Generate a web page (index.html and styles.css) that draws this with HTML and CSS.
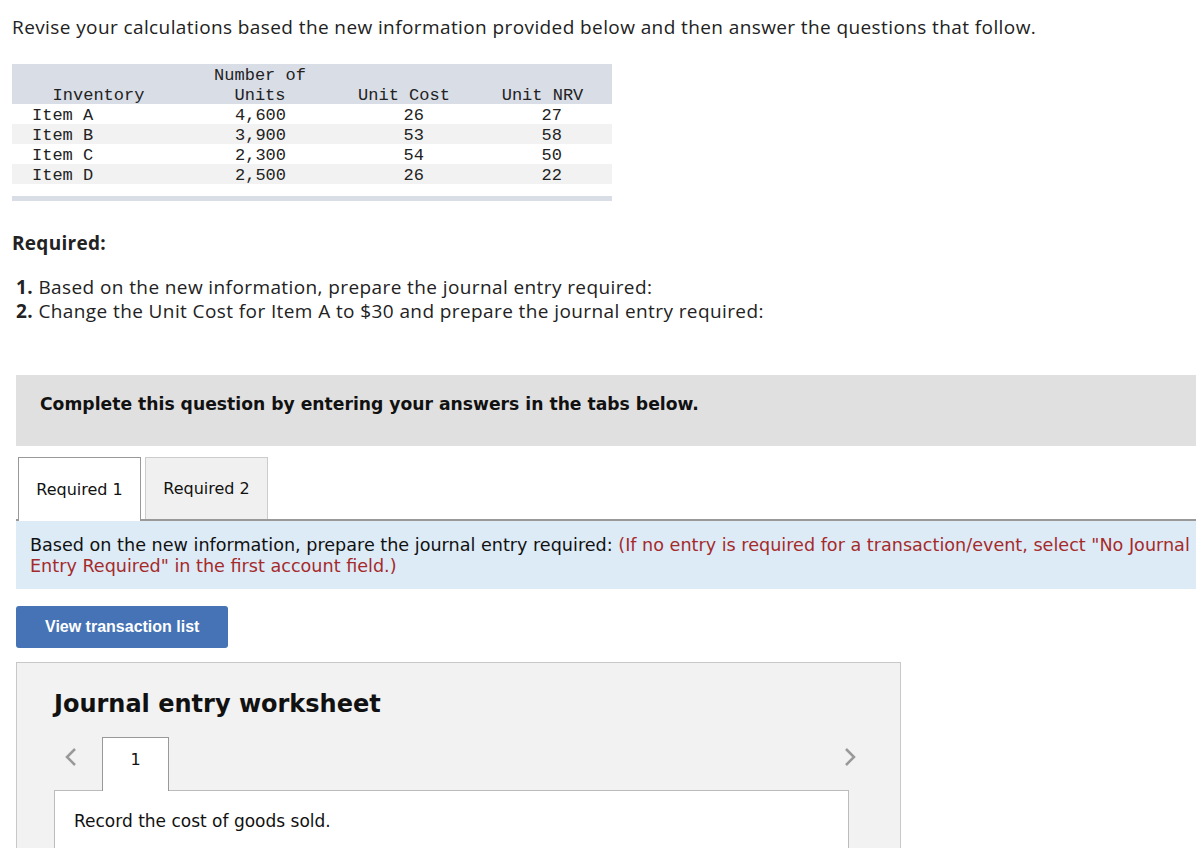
FILE: index.html
```html
<!DOCTYPE html>
<html lang="en">
<head>
  <meta charset="UTF-8">
  <title>Inventory NRV</title>
  <link rel="stylesheet" href="styles.css">
</head>
<body>
  <p class="intro">Revise your calculations based the new information provided below and then answer the questions that follow.</p>

  <table class="inv-table">
    <thead>
      <tr>
        <th class="col-name"></th>
        <th class="col-units">Number of</th>
        <th class="col-cost"></th>
        <th class="col-nrv"></th>
      </tr>
      <tr>
        <th class="col-name">Inventory</th>
        <th class="col-units">Units</th>
        <th class="col-cost">Unit Cost</th>
        <th class="col-nrv">Unit NRV</th>
      </tr>
    </thead>
    <tbody>
      <tr><td class="col-name">Item A</td><td class="col-units">4,600</td><td class="col-cost">26</td><td class="col-nrv">27</td></tr>
      <tr><td class="col-name">Item B</td><td class="col-units">3,900</td><td class="col-cost">53</td><td class="col-nrv">58</td></tr>
      <tr><td class="col-name">Item C</td><td class="col-units">2,300</td><td class="col-cost">54</td><td class="col-nrv">50</td></tr>
      <tr><td class="col-name">Item D</td><td class="col-units">2,500</td><td class="col-cost">26</td><td class="col-nrv">22</td></tr>
      <tr class="spacer"><td colspan="4"></td></tr>
    </tbody>
  </table>

  <h3 class="required-title">Required:</h3>
  <ol class="required-list">
    <li><strong>1.</strong> Based on the new information, prepare the journal entry required:</li>
    <li><strong>2.</strong> Change the Unit Cost for Item A to $30 and prepare the journal entry required:</li>
  </ol>

  <div class="complete-box">Complete this question by entering your answers in the tabs below.</div>

  <div class="tabs">
    <div class="tab active">Required 1</div>
    <div class="tab">Required 2</div>
  </div>

  <div class="info-box">
    Based on the new information, prepare the journal entry required: <span class="hint">(If no entry is required for a transaction/event, select "No Journal Entry Required" in the first account field.)</span>
  </div>

  <button class="view-btn">View transaction list</button>

  <div class="worksheet">
    <h2>Journal entry worksheet</h2>
    <div class="ws-nav">
      <svg class="arrow" width="14" height="22" viewBox="0 0 14 22"><path d="M11 3 L3 11 L11 19" fill="none" stroke="#999" stroke-width="2.5"/></svg>
      <div class="ws-tab">1</div>
      <svg class="arrow right" width="14" height="22" viewBox="0 0 14 22"><path d="M3 3 L11 11 L3 19" fill="none" stroke="#999" stroke-width="2.5"/></svg>
    </div>
    <div class="ws-body">Record the cost of goods sold.</div>
  </div>
</body>
</html>
```
FILE: styles.css
```css
body {
  margin: 0;
  padding: 0 0 0 12px;
  font-family: "Open Sans", "Liberation Sans", Arial, sans-serif;
  color: #222;
  overflow: hidden;
}

.intro {
  margin: 14px 0 0 0;
  font-size: 19px;
  letter-spacing: 0.4px;
  line-height: 26px;
}

.inv-table {
  margin-top: 24px;
  border-collapse: collapse;
  width: 600px;
  table-layout: fixed;
  font-family: "Liberation Mono", "Courier New", monospace;
  font-size: 17px;
  color: #222;
}

.inv-table th {
  background: #d9dde6;
  font-weight: normal;
  height: 20px;
  padding: 3px 0 0 0;
  line-height: 17px;
  text-align: center;
  box-sizing: border-box;
}

.inv-table td {
  height: 20px;
  padding: 3px 0 0 0;
  line-height: 17px;
  box-sizing: border-box;
}

.inv-table tbody tr:nth-child(even) td { background: #f2f2f2; }

.inv-table tr.spacer td {
  height: 14px;
  padding: 0;
  background: #fff;
  border-bottom: 5px solid #d9dde6;
}

.col-name { width: 173px; }
.col-units { width: 150px; }
.col-cost { width: 138px; }
.col-nrv { width: 139px; }

td.col-name { padding-left: 20px; }
td.col-units { text-align: right; padding-right: 49px; }
td.col-cost { text-align: right; padding-right: 49px; }
td.col-nrv { text-align: right; padding-right: 50px; }

.required-title {
  margin: 29px 0 0 0;
  font-size: 19px;
  letter-spacing: 0.3px;
  line-height: 26px;
}

.required-list {
  list-style: none;
  margin: 19px 0 0 4px;
  padding: 0;
  font-size: 19px;
  letter-spacing: 0.4px;
  line-height: 24px;
}

.complete-box {
  margin: 52px 0 0 4px;
  height: 71px;
  box-sizing: border-box;
  padding: 19px 24px;
  background: #e0e0e0;
  font-family: "DejaVu Sans", Verdana, sans-serif;
  font-weight: bold;
  font-size: 17.2px;
  color: #111;
}

.tabs {
  display: flex;
  margin: 11px 0 0 4px;
  gap: 4px;
  padding-left: 2px;
  border-bottom: 2px solid #999;
  height: 62px;
}

.tab {
  width: 123px;
  height: 62px;
  box-sizing: border-box;
  display: flex;
  align-items: center;
  justify-content: center;
  background: #f0f0f0;
  border: 1px solid #ccc;
  border-bottom: none;
  font-family: "DejaVu Sans", Verdana, sans-serif;
  font-size: 16px;
  color: #111;
}

.tab.active {
  background: #fff;
  border-color: #999;
  height: 64px;
}

.info-box {
  margin: 0 0 0 4px;
  padding: 14px 0 12px 14px;
  background: #ddebf7;
  font-family: "DejaVu Sans", Verdana, sans-serif;
  font-size: 17.6px;
  line-height: 21px;
  color: #111;
}

.hint { color: #a52a2a; }

.view-btn {
  display: block;
  margin: 17px 0 0 4px;
  width: 212px;
  height: 42px;
  border: none;
  border-radius: 3px;
  background: #4573b5;
  color: #fff;
  font-family: "Liberation Sans", Arial, sans-serif;
  font-weight: bold;
  font-size: 16px;
  text-align: left;
  padding-left: 29px;
}

.worksheet {
  margin: 14px 0 0 4px;
  width: 885px;
  height: 220px;
  box-sizing: border-box;
  background: #f2f2f2;
  border: 1px solid #c8c8c8;
  padding: 0 51px 0 37px;
}

.worksheet h2 {
  margin: 26px 0 0 0;
  font-family: "DejaVu Sans", Verdana, sans-serif;
  font-size: 24px;
  line-height: 30px;
  color: #111;
}

.ws-nav {
  display: flex;
  align-items: center;
  margin-top: 18px;
  height: 54px;
}

.arrow { margin: 0 0 14px 10px; }
.arrow.right { margin-left: auto; margin-right: -8px; }

.ws-tab {
  margin-left: 24px;
  width: 67px;
  height: 54px;
  box-sizing: border-box;
  background: #fff;
  border: 1px solid #999;
  border-bottom: none;
  position: relative;
  z-index: 1;
  text-align: center;
  padding-top: 12px;
  font-family: "DejaVu Sans", Verdana, sans-serif;
  font-size: 16px;
  color: #111;
}

.ws-body {
  margin-top: -1px;
  background: #fff;
  border: 1px solid #bbb;
  height: 120px;
  padding: 20px 19px;
  font-family: "DejaVu Sans", Verdana, sans-serif;
  font-size: 17px;
  color: #111;
}
```
